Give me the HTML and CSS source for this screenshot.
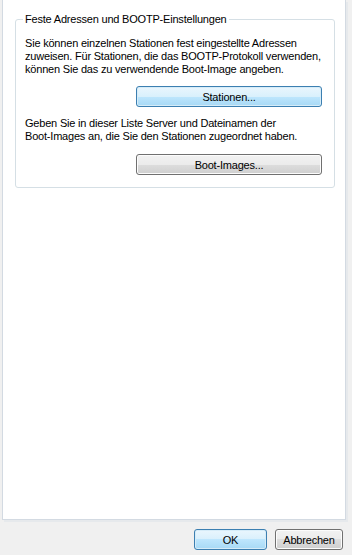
FILE: index.html
```html
<!DOCTYPE html>
<html lang="de">
<head>
<meta charset="utf-8">
<link rel="stylesheet" href="styles.css">
</head>
<body>
<div class="panel">
  <fieldset class="group">
    <legend class="legend">Feste Adressen und BOOTP-Einstellungen</legend>
    <div class="group-body">
      <p class="text">Sie können einzelnen Stationen fest eingestellte Adressen zuweisen. Für Stationen, die das BOOTP-Protokoll verwenden, können Sie das zu verwendende Boot-Image angeben.</p>
      <div class="btn-row"><button class="btn btn-default wide">Stationen...</button></div>
      <p class="text text2">Geben Sie in dieser Liste Server und Dateinamen der <span class="nowrap">Boot-Images</span> an, die Sie den Stationen zugeordnet haben.</p>
      <div class="btn-row"><button class="btn wide btn-second">Boot-Images...</button></div>
    </div>
  </fieldset>
</div>
<div class="footer">
  <button class="btn btn-default ok">OK</button>
  <button class="btn cancel">Abbrechen</button>
</div>
</body>
</html>
```

FILE: styles.css
```css
html, body {
  margin: 0;
  padding: 0;
}
body {
  background: #f0f0f0;
  font-family: "Liberation Sans", Arial, sans-serif;
  font-size: 11px;
  letter-spacing: -0.2px;
  color: #000;
  width: 352px;
  height: 555px;
  overflow: hidden;
}
.panel {
  box-sizing: border-box;
  margin-left: 2px;
  width: 344px;
  height: 520px;
  background: #fff;
  border: 1px solid #d3dae2;
  border-top: none;
  box-shadow: 2px 2px 0 #e6e9ec;
  padding: 13px 0 0 12px;
}
.group {
  margin: 0;
  padding: 0;
  width: 320px;
  box-sizing: border-box;
  border: 1px solid #d5dfe5;
  border-radius: 3px;
  min-width: 0;
}
.legend {
  margin-left: 7px;
  padding: 0 2px;
  line-height: 13px;
  color: #000;
}
.group-body {
  padding: 11px 12px 12px 9px;
}
.text {
  margin: 0;
  line-height: 13px;
}
.nowrap {
  white-space: nowrap;
}
.text2 {
  margin-top: 10px;
}
.btn-row {
  display: flex;
  justify-content: flex-end;
  margin-top: 10px;
}
.btn-second {
  margin-top: 1px;
}
.btn {
  font-family: "Liberation Sans", Arial, sans-serif;
  font-size: 11px;
  letter-spacing: -0.2px;
  height: 21px;
  padding: 0;
  box-sizing: border-box;
  border: 1px solid #707070;
  border-radius: 3px;
  background: linear-gradient(#f2f2f2 0%, #ebebeb 50%, #dddddd 50%, #cfcfcf 100%);
  box-shadow: inset 0 0 0 1px #fcfcfc;
  color: #000;
}
.btn-default {
  border-color: #3c7fb1;
  background: linear-gradient(#eaf6fd 0%, #d9f0fc 50%, #bee6fd 50%, #a7d9f5 100%);
  box-shadow: inset 0 0 0 1px #d6ecf8;
}
.wide {
  width: 186px;
}
.footer {
  display: flex;
  justify-content: flex-end;
  gap: 8px;
  padding: 9px 9px 0 0;
}
.ok {
  width: 73px;
}
.cancel {
  width: 68px;
}
```
